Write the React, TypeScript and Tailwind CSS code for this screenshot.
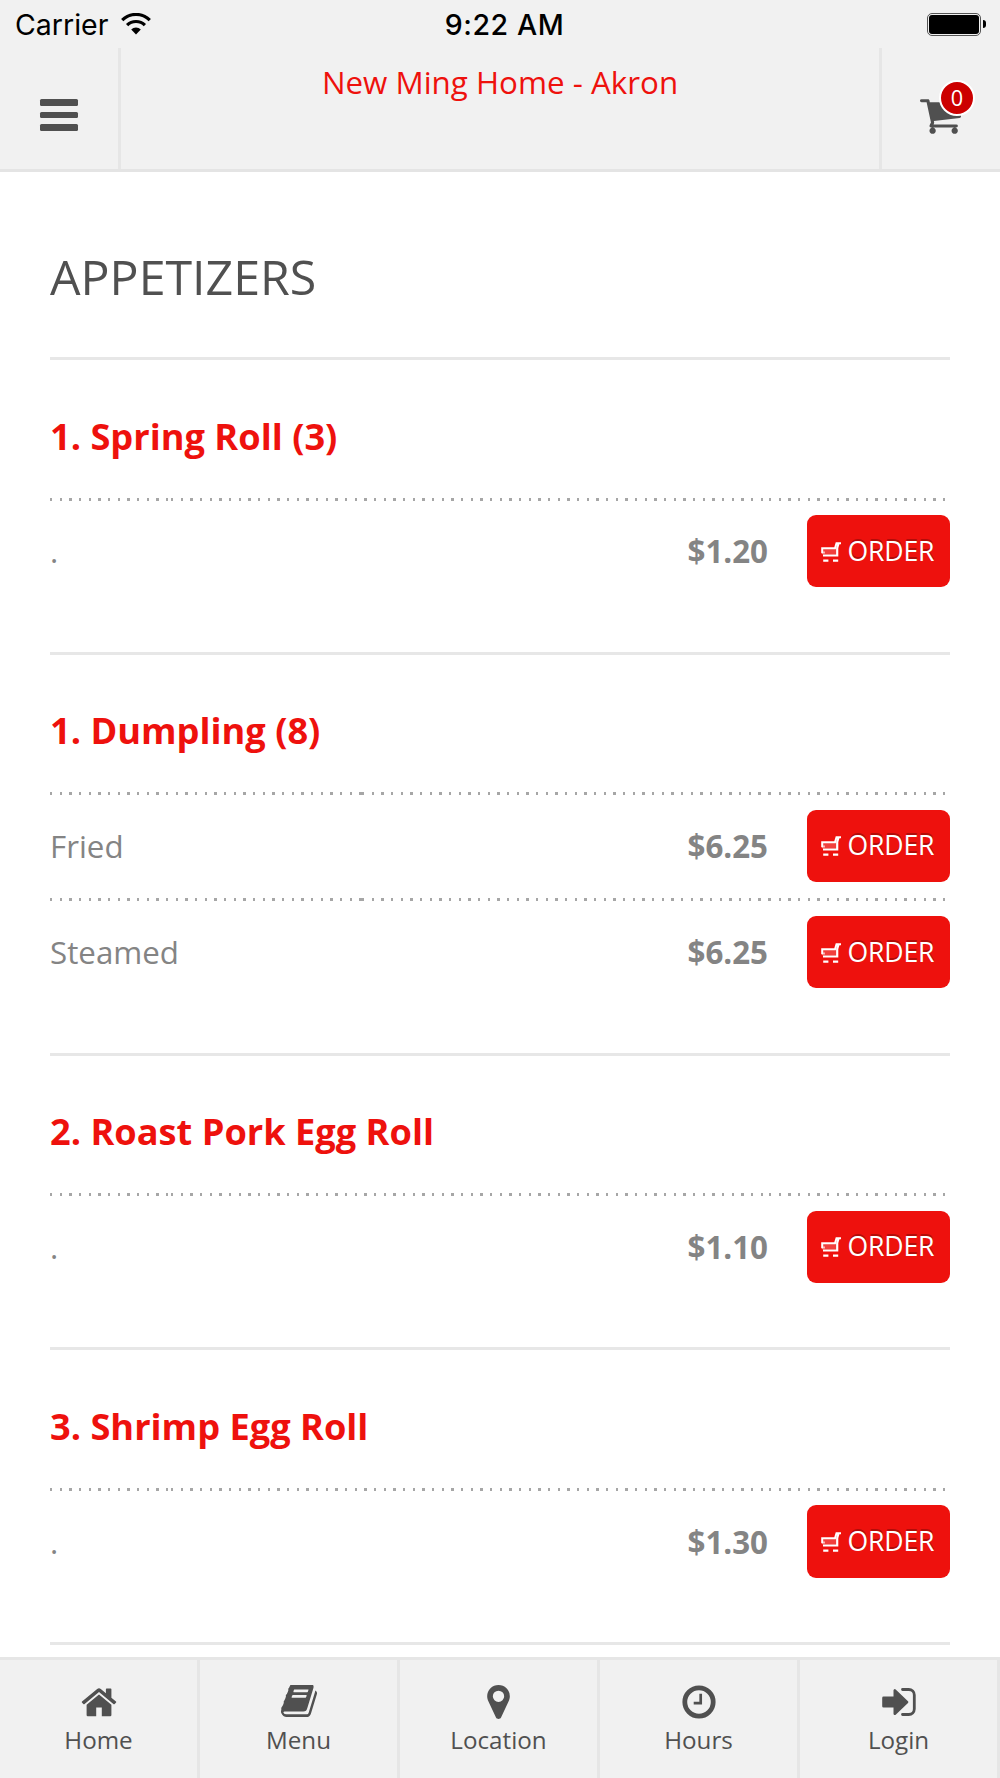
const OPEN_SANS = "font-['Open_Sans',sans-serif]";

type Option = { label: string; price: string };
type MenuItem = { name: string; options: Option[]; cells: string };

const SINGLE = 'grid-cols-[121px_598px_181px]';
const MULTI = 'grid-cols-[312px_407px_181px]';

const ITEMS: MenuItem[] = [
  { name: '1. Spring Roll (3)', options: [{ label: '.', price: '$1.20' }], cells: SINGLE },
  {
    name: '1. Dumpling (8)',
    options: [
      { label: 'Fried', price: '$6.25' },
      { label: 'Steamed', price: '$6.25' },
    ],
    cells: MULTI,
  },
  { name: '2. Roast Pork Egg Roll', options: [{ label: '.', price: '$1.10' }], cells: SINGLE },
  { name: '3. Shrimp Egg Roll', options: [{ label: '.', price: '$1.30' }], cells: SINGLE },
];

const TABS = [
  { label: 'Home', icon: HomeIcon },
  { label: 'Menu', icon: BookIcon },
  { label: 'Location', icon: PinIcon },
  { label: 'Hours', icon: ClockIcon },
  { label: 'Login', icon: LoginIcon },
];

function HomeIcon() {
  return (
    <svg viewBox="0 0 36 34" className="w-9 h-[34px]" fill="#505050">
      <path d="M18 9.6 5.6 19.8V30a1.2 1.2 0 0 0 1.2 1.2h8.4v-8.6h5.6v8.6h8.4a1.2 1.2 0 0 0 1.2-1.2V19.8z" />
      <path d="m35 16.5-4.6-3.8V4.2a.7.7 0 0 0-.7-.7h-4.1a.7.7 0 0 0-.7.7v4L19.8 4a2.9 2.9 0 0 0-3.6 0L1 16.5a.8.8 0 0 0-.1 1l1.4 1.6c.3.3.7.3 1 .1L18 7l14.7 12.2c.3.2.7.2 1-.1l1.400-1.600a.8.8 0 0 0-.1-1z" />
    </svg>
  );
}

function BookIcon() {
  return (
    <svg viewBox="0 0 1664 1536" className="w-9 h-[34px]" fill="#505050">
      <path d="M1639 280q40 57 18 129l-275 906q-19 64-76.500 107.500t-122.500 43.500h-923q-77 0-148.500-53.500t-99.500-131.500q-24-67-2-127 0-4 3-27t4-37q1-8-3-21.500t-3-19.500q2-11 8-21t16.500-23.500 16.500-23.500q23-38 45-91.500t30-91.500q3-10 .5-30t-.5-28q3-11 17-28t17-23q21-36 42-92t25-90q1-9-2.500-32t.5-28q4-13 22-30.500t22-22.500q19-26 42.500-84.500t27.500-96.500q1-8-3-25.500t-2-26.500q2-8 9-18t18-23 17-21q8-12 16.500-30.500t15-35 16-36 19.500-32 26.500-23.500 36-11.500 47.500 5.500l-1 3q38-9 51-9h761q74 0 114 56t18 130l-274 906q-36 119-71.500 153.500t-128.500 34.500h-869q-27 0-38 15-11 16-1 43 24 70 144 70h923q29 0 56-15.500t35-41.500l300-987q7-22 5-57 38 15 59 43zM575 282q-4 13 2 22.500t20 9.500h608q13 0 25.500-9.500t16.500-22.500l21-64q4-13-2-22.500t-20-9.500h-608q-13 0-25.500 9.500t-16.500 22.500zM492 538q-4 13 2 22.500t20 9.500h608q13 0 25.500-9.500t16.500-22.500l21-64q4-13-2-22.500t-20-9.500h-608q-13 0-25.500 9.500t-16.500 22.500z" />
    </svg>
  );
}

function PinIcon() {
  return (
    <svg viewBox="0 0 1024 1536" className="w-[23px] h-[34px]" fill="#505050">
      <path d="M768 512q0-106-75-181t-181-75-181 75-75 181 75 181 181 75 181-75 75-181zm256 0q0 109-33 179l-364 774q-16 33-47.500 52t-67.500 19-67.500-19-46.500-52l-365-774q-33-70-33-179 0-212 150-362t362-150 362 150 150 362z" />
    </svg>
  );
}

function ClockIcon() {
  return (
    <svg viewBox="0 0 34 34" className="w-[34px] h-[34px]" fill="none" stroke="#505050">
      <circle cx="17" cy="17" r="14.2" strokeWidth="4.8" />
      <path d="M18.700 8.700V18.200H11.700" strokeWidth="2.700" />
    </svg>
  );
}

function LoginIcon() {
  return (
    <svg viewBox="0 0 34 34" className="w-[34px] h-[34px]">
      <path d="M1.500 11.600h10V5.300a1.300 1.300 0 0 1 2.200-.9L26 16.200a1.200 1.200 0 0 1 0 1.700L13.700 29.700a1.300 1.300 0 0 1-2.200-.9v-6.300h-10A1.300 1.300 0 0 1 .2 21.200v-8.300a1.300 1.300 0 0 1 1.300-1.300z" fill="#505050" />
      <path d="M20.500 4.500h6.300a5.500 5.500 0 0 1 5.500 5.500v14a5.500 5.500 0 0 1-5.500 5.500h-6.300" fill="none" stroke="#505050" strokeWidth="2.800" strokeLinecap="round" />
    </svg>
  );
}

function WifiIcon() {
  return (
    <svg viewBox="0 0 30 22" className="w-[30px] h-[22px]" fill="none" stroke="#000" strokeWidth="3.200">
      <path d="M1.200 7.100a19.600 19.600 0 0 1 27.600 0" />
      <path d="M6.100 12.200a12.500 12.500 0 0 1 17.800 0" />
      <path d="M15 21.500l-4.800-4.900a6.800 6.800 0 0 1 9.600 0z" fill="#000" stroke="none" />
    </svg>
  );
}

function OrderCartIcon() {
  return (
    <svg viewBox="0 0 20 20" className="w-5 h-5 mr-[6.500px]" fill="none" stroke="#fff">
      <path d="M1 6.500h14v6H1z" fill="#fff" fillOpacity="0.2" stroke="none" />
      <path d="M20 1.300h-4.500L14 6.300H1.200v5" strokeWidth="2" />
      <path d="M17.500 1.500 16.200 6v7.500H2" strokeWidth="2.200" />
      <path d="M1 10.500h3" strokeWidth="2" strokeOpacity="0.6" />
      <path d="M2.200 18.600h5.200M12 18.600h5.200" strokeWidth="2.200" />
    </svg>
  );
}

// dots restart at every cell boundary
function DottedRule({ cells }: { cells: string }) {
  return (
    <div className={`grid ${cells} h-[3px]`}>
      {[0, 1, 2].map((i) => (
        <div
          key={i}
          className="bg-[repeating-linear-gradient(90deg,#a6a6a6_0px,#a6a6a6_2.400px,transparent_2.400px,transparent_9.667px)]"
        />
      ))}
    </div>
  );
}

function OrderButton() {
  return (
    <button className="flex items-center w-[143px] h-[72.500px] pl-[14px] pt-px rounded-[9px] bg-[#ee110d] text-white text-[26.600px] tracking-[-0.150px] [text-shadow:0_-2px_0_rgba(0,0,0,0.25)]">
      <OrderCartIcon />
      ORDER
    </button>
  );
}

function Item({ item }: { item: MenuItem }) {
  return (
    <section className="pb-[64.700px] border-b-3 border-[#e7e7e7]">
      <h2 className="h-[137.500px] pt-[50.500px] text-[36.200px] leading-[50px] font-bold text-[#ee110d]">{item.name}</h2>
      {item.options.map((option) => (
        <div key={option.label} className="h-[106.300px] [&:last-child]:h-[89.500px]">
          <DottedRule cells={item.cells} />
          <div className="flex items-center h-[73px] mt-[14.200px] text-[31.300px] text-[#848484]">
            <span className="flex-1 pt-px">{option.label}</span>
            <span className="w-[119.500px] pt-px font-bold">{option.price}</span>
            <OrderButton />
          </div>
        </div>
      ))}
    </section>
  );
}

export default function App() {
  return (
    <div className={`flex flex-col w-[1000px] h-[1778px] overflow-hidden bg-white ${OPEN_SANS}`}>
      {/* Status bar */}
      <div className="flex items-center justify-between h-12 pl-[15px] pr-[14px] bg-[#f1f1f1] text-black font-['Inter',sans-serif] text-[28.500px] shrink-0">
        <div className="flex flex-1 items-center gap-[13px]">
          <span className="pt-[3px]">Carrier</span>
          <WifiIcon />
        </div>
        <span className="pt-[3px] pl-[8px] font-medium tracking-[0.600px]">9:22 AM</span>
        <div className="flex flex-1 items-center justify-end gap-[2px]">
          <div className="w-[54px] h-[23px] rounded-[5px] border border-[#555] p-px">
            <div className="h-full rounded-[3px] bg-black" />
          </div>
          <div className="w-[3px] h-[8px] rounded-r-full bg-black" />
        </div>
      </div>

      {/* Header */}
      <header className="flex h-[124px] bg-[#f1f1f1] border-b-3 border-[#e4e4e4] shrink-0">
        <button className="flex flex-col items-center justify-center gap-[6px] w-[121px] pt-[13px] border-r-3 border-[#e6e6e6]">
          <span className="w-[38px] h-[6.500px] rounded-[1.500px] bg-[#505050]" />
          <span className="w-[38px] h-[6.500px] rounded-[1.500px] bg-[#505050]" />
          <span className="w-[38px] h-[6.500px] rounded-[1.500px] bg-[#505050]" />
        </button>
        <h1 className="flex-1 pt-[12px] text-center text-[31.350px] leading-[44px] text-[#ee110d]">New Ming Home - Akron</h1>
        <button className="flex items-start w-[121px] border-l-3 border-[#e6e6e6] pl-[38px] pt-[50.500px]">
          <span className="relative block w-10 h-9">
            <svg viewBox="0 0 1664 1408" className="w-[41px] h-[35px]" fill="#505050">
              <path d="M640 1280q0 52-38 90t-90 38-90-38-38-90 38-90 90-38 90 38 38 90zm896 0q0 52-38 90t-90 38-90-38-38-90 38-90 90-38 90 38 38 90zm128-1088v512q0 24-16.500 42.500t-40.500 21.500l-1044 122q13 60 13 70 0 16-24 64h920q26 0 45 19t19 45-19 45-45 19h-1024q-26 0-45-19t-19-45q0-11 8-31.500t16-36 21.500-40 15.500-29.500l-177-823h-204q-26 0-45-19t-19-45 19-45 45-19h256q16 0 28.500 6.500t19.500 15.500 13 24.500 8 26 5.500 29.500 4.500 26h1201q26 0 45 19t19 45z" />
            </svg>
            <span className="absolute left-[19px] -top-[18.500px] flex items-center justify-center w-[36px] h-[36px] pt-px rounded-full border-2 border-white bg-[#cc0000] text-white text-[21.700px]">0</span>
          </span>
        </button>
      </header>

      {/* Menu list */}
      <main className="flex-1 min-h-0 overflow-hidden px-[50px]">
        <h1 className="h-[188px] pt-[70.500px] border-b-3 border-[#e7e7e7] text-[48.300px] leading-[66px] text-[#505050]">APPETIZERS</h1>
        {ITEMS.map((item) => (
          <Item key={item.name} item={item} />
        ))}
      </main>

      {/* Tab bar */}
      <nav className="grid grid-cols-5 h-[121px] border-t-3 border-[#e6e6e6] bg-[#f1f1f1] shrink-0">
        {TABS.map(({ label, icon: Icon }) => (
          <a key={label} className="flex flex-col items-center pt-[24.500px] border-r-3 border-[#e6e6e6] text-[24.200px] leading-[34px] text-[#505050]">
            <Icon />
            <span className="mt-[4.500px]">{label}</span>
          </a>
        ))}
      </nav>
    </div>
  );
}
